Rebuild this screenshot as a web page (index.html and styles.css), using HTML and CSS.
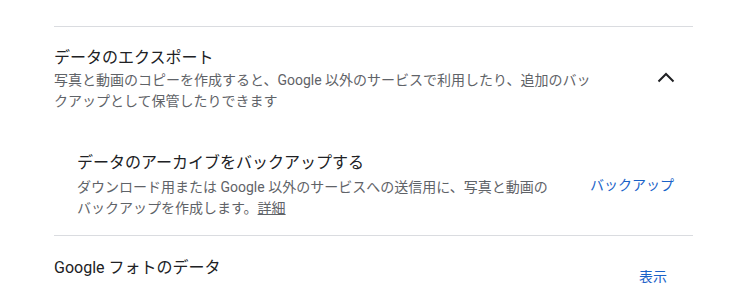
FILE: index.html
```html
<!DOCTYPE html>
<html lang="ja">
<head>
  <meta charset="UTF-8">
  <title>データのエクスポート</title>
  <link rel="stylesheet" href="styles.css">
</head>
<body>

<div class="page">
  <!-- エクスポート -->
  <section class="panel">
    <div class="panel-head">
      <div class="panel-text">
        <h2 class="panel-title">データのエクスポート</h2>
        <p class="panel-desc">写真と動画のコピーを作成すると、Google 以外のサービスで利用したり、追加のバックアップとして保管したりできます</p>
      </div>
      <button class="chevron" aria-label="閉じる">
        <svg width="24" height="24" viewBox="0 0 24 24"><path d="M4.5 14.5l7.5-7.5 7.5 7.5" fill="none" stroke="#202124" stroke-width="2"/></svg>
      </button>
    </div>

    <div class="sub-item">
      <div class="sub-text">
        <h3 class="sub-title">データのアーカイブをバックアップする</h3>
        <p class="sub-desc">ダウンロード用または Google 以外のサービスへの送信用に、写真と動画のバックアップを作成します。<a href="#" class="more">詳細</a></p>
      </div>
      <a href="#" class="action">バックアップ</a>
    </div>
  </section>

  <!-- フォトのデータ -->
  <section class="panel panel-photos">
    <div class="row">
      <h2 class="panel-title">Google フォトのデータ</h2>
      <a href="#" class="action action-low">表示</a>
    </div>
  </section>
</div>

</body>
</html>
```

FILE: styles.css
```css
body {
  margin: 0;
  background: #ffffff;
  font-family: Roboto, "Noto Sans CJK JP", sans-serif;
  color: #202124;
}
.page {
  padding: 26px 55px 0 54px;
}
.panel {
  border-top: 1px solid #dadce0;
  padding-top: 19px;
}
.panel-photos {
  padding-top: 20px;
}
.panel-head {
  display: flex;
  align-items: center;
}
.panel-text {
  width: 548px;
}
.panel-title {
  margin: 0;
  font-size: 16px;
  font-weight: 400;
  line-height: 24px;
}
.panel-desc {
  margin: 0;
  font-size: 14px;
  line-height: 21px;
  color: #5f6368;
}
.chevron {
  margin: 0 15px 0 auto;
  padding: 0;
  border: none;
  background: none;
  width: 24px;
  height: 24px;
}
.sub-item {
  display: flex;
  align-items: center;
  padding: 39px 19px 16px 23px;
}
.sub-text {
  width: 480px;
}
.sub-title {
  margin: 0 0 2px;
  font-size: 16px;
  font-weight: 400;
  line-height: 24px;
}
.sub-desc {
  margin: 0;
  font-size: 14px;
  line-height: 21px;
  color: #5f6368;
}
.more {
  color: #5f6368;
}
.action {
  margin-left: auto;
  font-size: 14px;
  line-height: 20px;
  color: #1a62c8;
  text-decoration: none;
}
.row {
  display: flex;
  align-items: flex-start;
}
.action-low {
  margin-top: 11px;
  margin-right: 26px;
}
```
